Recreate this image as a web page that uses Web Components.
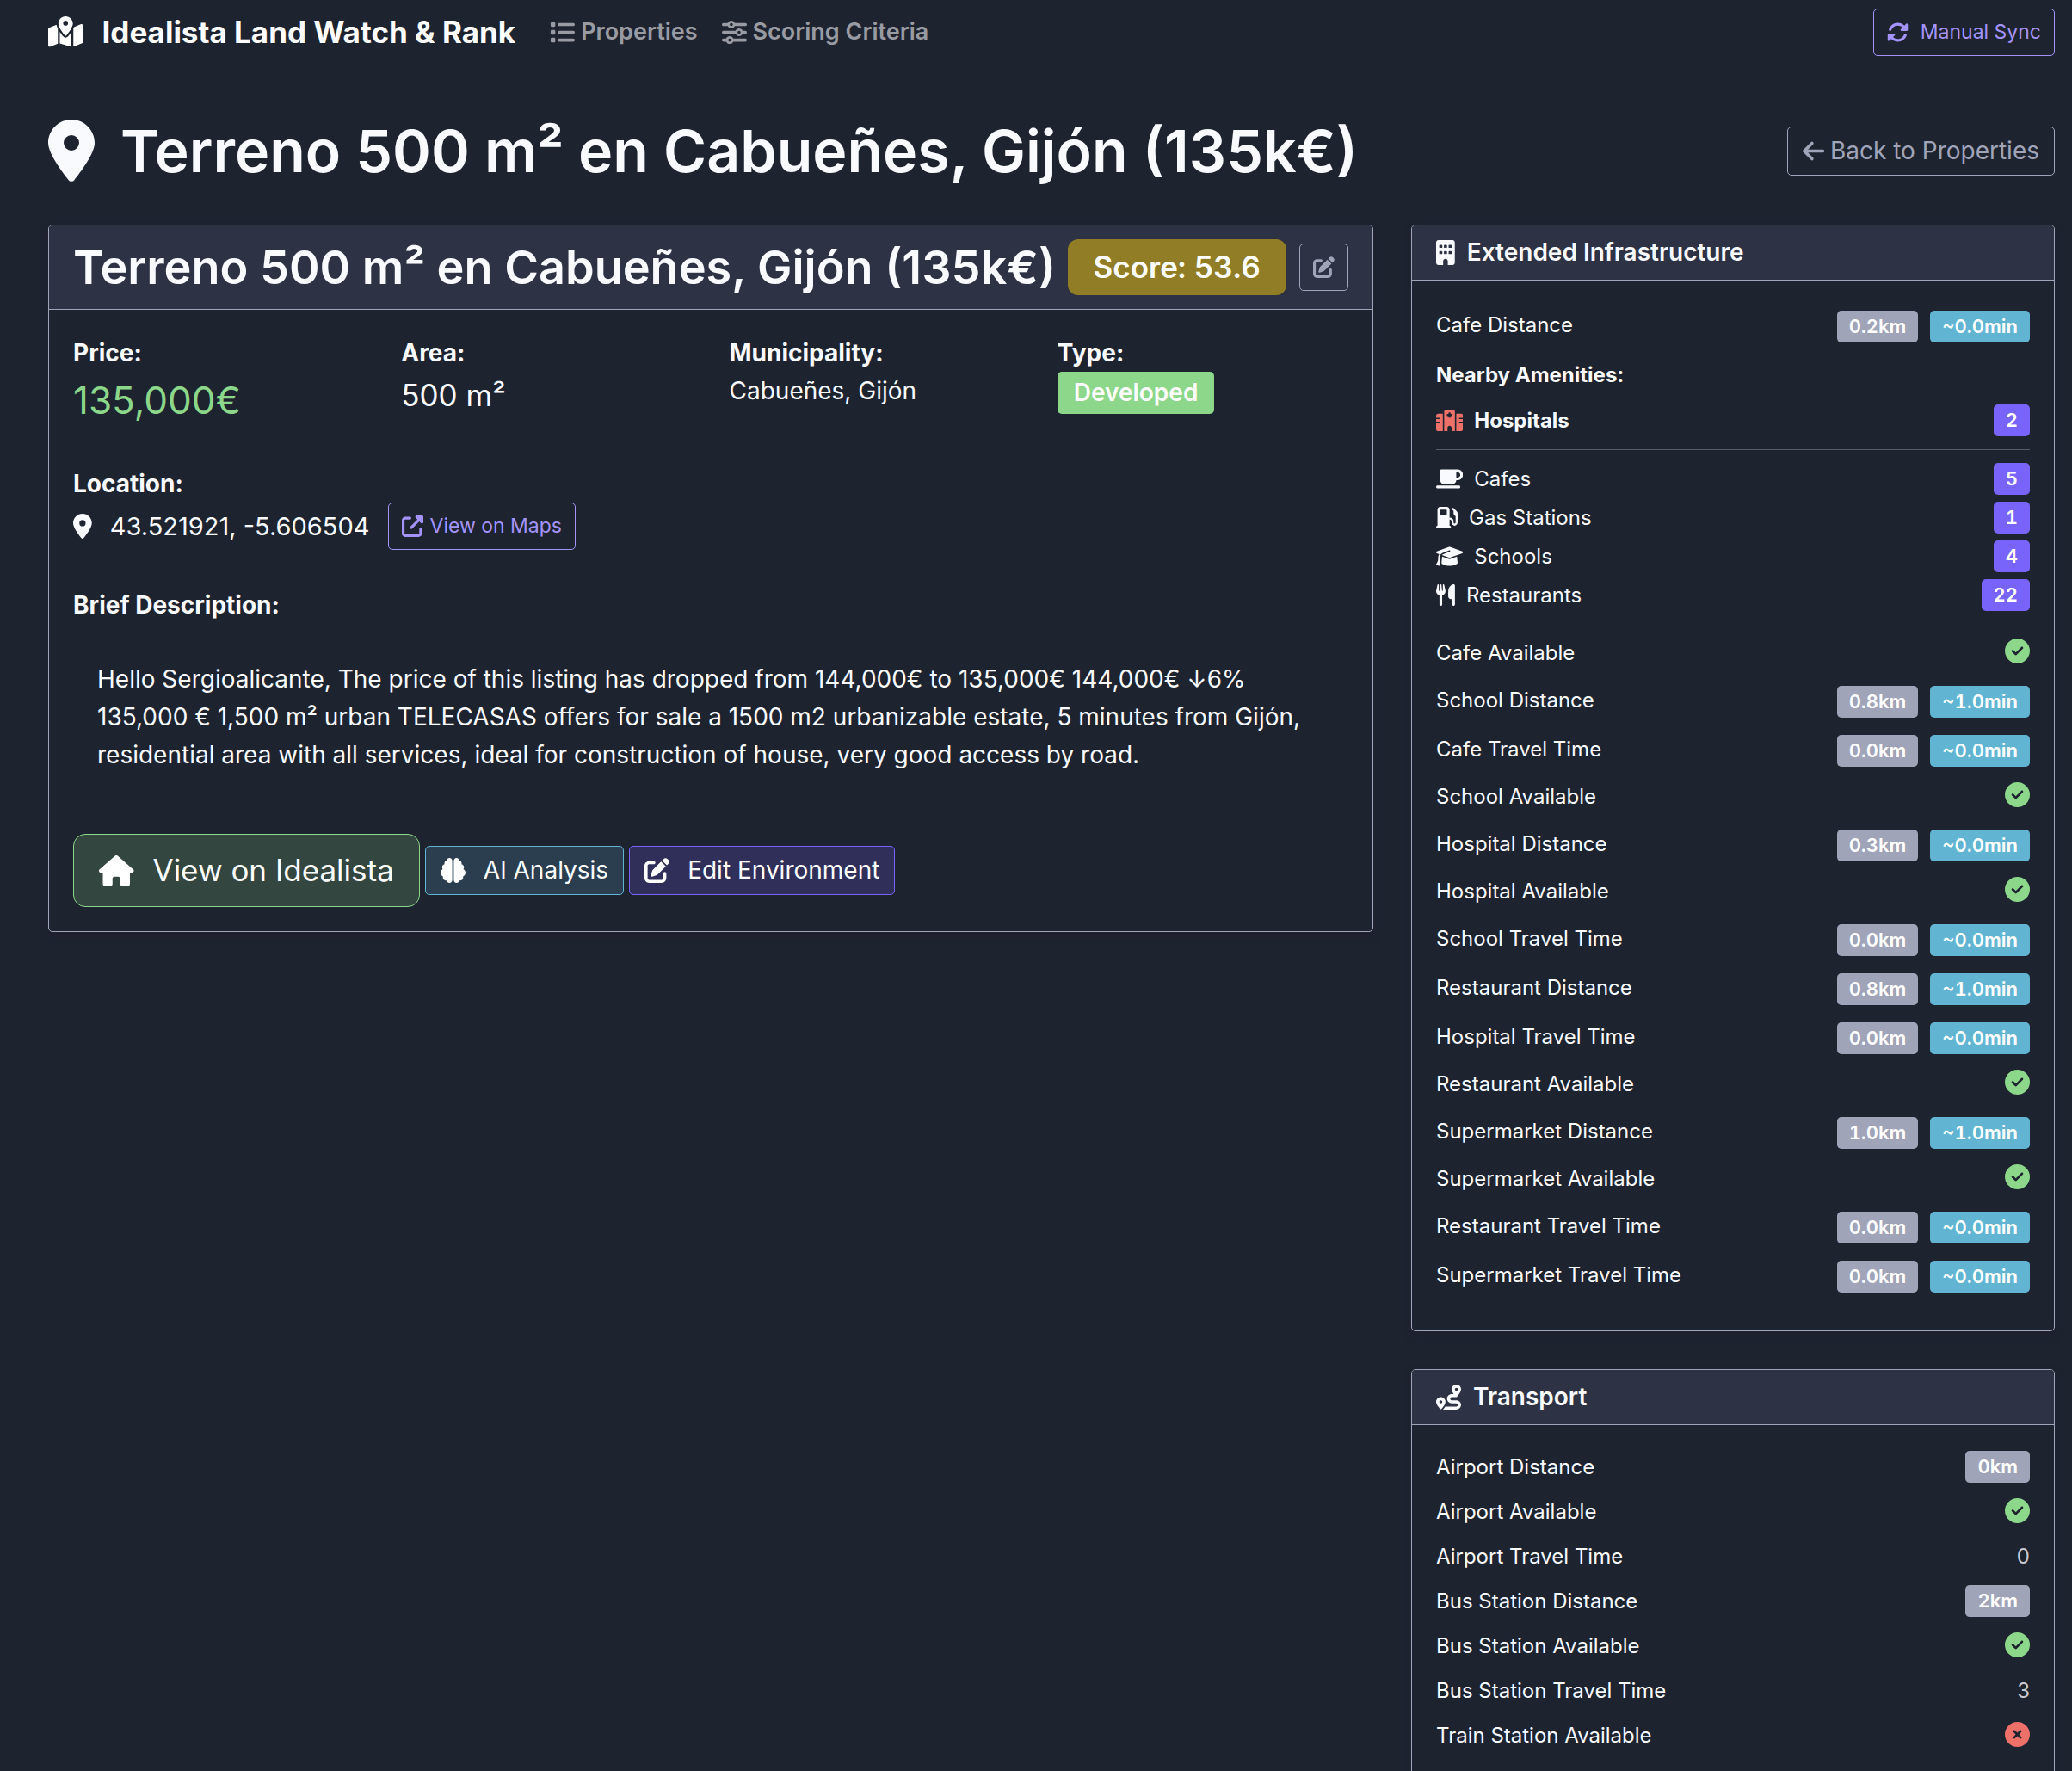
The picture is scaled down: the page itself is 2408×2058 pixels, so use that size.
<!DOCTYPE html>
<html lang="en">
<head>
<meta charset="utf-8">
<meta name="viewport" content="width=device-width, initial-scale=1">
<title>Idealista Land Watch &amp; Rank</title>
<style>
  :root {
    --bg: #1e2330;
    --surface: #2e3245;
    --text: #f8fafd;
    --line: #a0a4b8;
    --grey: #a0a4b8;
    --teal: #61b5d3;
    --purple: #7864fa;
    --lilac: #a393fb;
    --green: #8cd789;
    --red: #ed7069;
    --gold: #917d25;
    --fs-sm: 24px;
    --fs: 28px;
    --fs-lg: 35px;
    --lh: 44px;
  }
  body {
    margin: 0;
    background: var(--bg);
    color: var(--text);
    font-family: Inter, "Liberation Sans", sans-serif;
    font-size: var(--fs);
    line-height: var(--lh);
  }
</style>
</head>
<body>
<land-app></land-app>

<script>
const ICONS = {
  map: [576, "M408 120c0 54.6-73.1 151.9-105.2 192c-7.7 9.6-22 9.6-29.6 0C241.1 271.9 168 174.6 168 120C168 53.7 221.7 0 288 0s120 53.7 120 120zm8 80.4c3.5-6.9 6.7-13.8 9.6-20.6c.5-1.2 1-2.5 1.5-3.7l116-46.4C558.9 123.4 576 135 576 152V422.8c0 9.8-6 18.6-15.1 22.3L416 503V200.4zM137.6 138.3c2.4 14.1 7.2 28.3 12.8 41.5c2.9 6.8 6.1 13.7 9.6 20.6V451.8L32.9 502.7C17.1 509 0 497.4 0 480.4V209.6c0-9.8 6-18.6 15.1-22.3l122.6-49zM327.8 332c13.9-17.4 35.7-45.7 56.2-77V504.3L192 449.4V255c20.5 31.3 42.3 59.6 56.2 77c20.5 25.6 59.1 25.6 79.6 0zM288 152a40 40 0 1 0 0-80 40 40 0 1 0 0 80z"],
  list: [512, "M40 48C26.7 48 16 58.7 16 72v48c0 13.3 10.7 24 24 24H88c13.3 0 24-10.7 24-24V72c0-13.3-10.7-24-24-24H40zM192 64c-17.7 0-32 14.3-32 32s14.3 32 32 32H480c17.7 0 32-14.3 32-32s-14.3-32-32-32H192zm0 160c-17.7 0-32 14.3-32 32s14.3 32 32 32H480c17.7 0 32-14.3 32-32s-14.3-32-32-32H192zm0 160c-17.7 0-32 14.3-32 32s14.3 32 32 32H480c17.7 0 32-14.3 32-32s-14.3-32-32-32H192zM16 232v48c0 13.3 10.7 24 24 24H88c13.3 0 24-10.7 24-24V232c0-13.3-10.7-24-24-24H40c-13.3 0-24 10.7-24 24zM40 368c-13.3 0-24 10.7-24 24v48c0 13.3 10.7 24 24 24H88c13.3 0 24-10.7 24-24V392c0-13.3-10.7-24-24-24H40z"],
  sliders: [512, "M0 416c0 17.7 14.3 32 32 32l54.7 0c12.3 28.3 40.5 48 73.3 48s61-19.7 73.3-48L480 448c17.7 0 32-14.3 32-32s-14.3-32-32-32l-246.7 0c-12.3-28.3-40.5-48-73.3-48s-61 19.7-73.3 48L32 384c-17.7 0-32 14.3-32 32zm128 0a32 32 0 1 1 64 0 32 32 0 1 1 -64 0zM320 256a32 32 0 1 1 64 0 32 32 0 1 1 -64 0zm32-80c-32.8 0-61 19.7-73.3 48L32 224c-17.7 0-32 14.3-32 32s14.3 32 32 32l246.7 0c12.3 28.3 40.5 48 73.3 48s61-19.7 73.3-48l54.7 0c17.7 0 32-14.3 32-32s-14.3-32-32-32l-54.7 0c-12.3-28.3-40.5-48-73.3-48zM192 128a32 32 0 1 1 0-64 32 32 0 1 1 0 64zm73.3-64C253 35.7 224.8 16 192 16s-61 19.7-73.3 48L32 64C14.3 64 0 78.3 0 96s14.3 32 32 32l86.7 0c12.3 28.3 40.5 48 73.3 48s61-19.7 73.3-48L480 128c17.7 0 32-14.3 32-32s-14.3-32-32-32L265.3 64z"],
  sync: [512, "M142.9 142.9c62.2-62.2 162.7-62.5 225.3-1L327 183c-6.9 6.9-8.9 17.2-5.2 26.2s12.5 14.8 22.2 14.8H463.5c0 0 0 0 0 0H472c13.3 0 24-10.7 24-24V72c0-9.7-5.8-18.5-14.8-22.2s-19.3-1.7-26.2 5.2L413.4 96.6c-87.6-86.5-228.7-86.2-315.8 1C73.2 122 55.6 150.7 44.8 181.4c-5.9 16.7 2.9 34.9 19.5 40.8s34.9-2.9 40.8-19.5c7.7-21.8 20.2-42.3 37.8-59.8zM16 312v7.6 .7V440c0 9.7 5.8 18.5 14.8 22.2s19.3 1.7 26.2-5.2l41.6-41.6c87.6 86.5 228.7 86.2 315.8-1c24.4-24.4 42.1-53.1 52.9-83.7c5.9-16.7-2.9-34.9-19.5-40.8s-34.9 2.9-40.8 19.5c-7.7 21.8-20.2 42.3-37.8 59.8c-62.2 62.2-162.7 62.5-225.3 1L185 329c6.9-6.9 8.9-17.2 5.2-26.2s-12.5-14.8-22.2-14.8H48.4h-.7H40c-13.3 0-24 10.7-24 24z"],
  pin: [384, "M215.7 499.2C267 435 384 279.4 384 192C384 86 298 0 192 0S0 86 0 192c0 87.4 117 243 168.3 307.2c12.3 15.3 35.1 15.3 47.4 0zM192 128a64 64 0 1 1 0 128 64 64 0 1 1 0-128z"],
  back: [448, "M9.4 233.4c-12.5 12.5-12.5 32.8 0 45.3l160 160c12.5 12.5 32.8 12.5 45.3 0s12.5-32.8 0-45.3L109.2 288 416 288c17.7 0 32-14.3 32-32s-14.3-32-32-32l-306.7 0L214.6 118.6c12.5-12.5 12.5-32.8 0-45.3s-32.8-12.5-45.3 0l-160 160z"],
  edit: [512, "M471.6 21.7c-21.9-21.9-57.3-21.9-79.2 0L362.3 51.7l97.9 97.9 30.1-30.1c21.9-21.9 21.9-57.3 0-79.2L471.6 21.7zm-299.2 220c-6.1 6.1-10.8 13.6-13.5 21.9l-29.6 88.8c-2.9 8.6-.6 18.1 5.8 24.6s15.9 8.7 24.6 5.8l88.8-29.6c8.2-2.7 15.7-7.4 21.9-13.5L437.7 172.3 339.7 74.3 172.4 241.7zM96 64C43 64 0 107 0 160V416c0 53 43 96 96 96H352c53 0 96-43 96-96V320c0-17.7-14.3-32-32-32s-32 14.3-32 32v96c0 17.7-14.3 32-32 32H96c-17.7 0-32-14.3-32-32V160c0-17.7 14.3-32 32-32h96c17.7 0 32-14.3 32-32s-14.3-32-32-32H96z"],
  external: [512, "M352 0c-12.9 0-24.6 7.8-29.6 19.8s-2.2 25.7 6.9 34.9L370.7 96 201.4 265.4c-12.5 12.5-12.5 32.8 0 45.3s32.8 12.5 45.3 0L416 141.3l41.4 41.4c9.2 9.2 22.9 11.9 34.9 6.9s19.8-16.6 19.8-29.6V32c0-17.7-14.3-32-32-32H352zM80 32C35.8 32 0 67.8 0 112V432c0 44.2 35.8 80 80 80H400c44.2 0 80-35.8 80-80V320c0-17.7-14.3-32-32-32s-32 14.3-32 32V432c0 8.8-7.2 16-16 16H80c-8.8 0-16-7.2-16-16V112c0-8.8 7.2-16 16-16H192c17.7 0 32-14.3 32-32s-14.3-32-32-32H80z"],
  home: [576, "M575.8 255.5c0 18-15 32.1-32 32.1h-32l.7 160.2c0 2.7-.2 5.4-.5 8.1V472c0 22.1-17.9 40-40 40H456c-1.1 0-2.2 0-3.3-.1c-1.4 .1-2.8 .1-4.2 .1H416 392c-22.1 0-40-17.9-40-40V448 384c0-17.7-14.3-32-32-32H256c-17.7 0-32 14.3-32 32v64 24c0 22.1-17.9 40-40 40H160 128.1c-1.5 0-3-.1-4.5-.2c-1.2 .1-2.4 .2-3.6 .2H104c-22.1 0-40-17.9-40-40V360c0-.9 0-1.9 .1-2.8V287.6H32c-18 0-32-14-32-32.1c0-9 3-17 10-24L266.4 8c7-7 15-8 22-8s15 2 21 7L564.8 231.5c8 7 12 15 11 24z"],
  brain: [512, "M184 0c30.9 0 56 25.1 56 56V456c0 30.9-25.1 56-56 56c-28.9 0-52.7-21.9-55.7-50.1c-5.2 1.4-10.7 2.1-16.3 2.1c-35.3 0-64-28.7-64-64c0-7.4 1.3-14.6 3.6-21.2C21.4 367.4 0 338.2 0 304c0-31.9 18.7-59.5 45.8-72.3C37.1 220.8 32 207 32 192c0-30.7 21.6-56.3 50.4-62.6C80.8 123.9 80 118 80 112c0-29.9 20.6-55.1 48.3-62.1C131.3 21.9 155.1 0 184 0zM328 0c28.9 0 52.6 21.9 55.7 49.9c27.8 7 48.3 32.1 48.3 62.1c0 6-.8 11.9-2.4 17.4c28.8 6.2 50.4 31.9 50.4 62.6c0 15-5.1 28.8-13.8 39.7C493.3 244.5 512 272.1 512 304c0 34.2-21.4 63.4-51.6 74.8c2.3 6.6 3.6 13.8 3.6 21.2c0 35.3-28.7 64-64 64c-5.6 0-11.1-.7-16.3-2.1c-3 28.2-26.8 50.1-55.7 50.1c-30.9 0-56-25.1-56-56V56c0-30.9 25.1-56 56-56z"],
  building: [384, "M48 0C21.5 0 0 21.5 0 48V464c0 26.5 21.5 48 48 48h96V432c0-26.5 21.5-48 48-48s48 21.5 48 48v80h96c26.5 0 48-21.5 48-48V48c0-26.5-21.5-48-48-48H48zM64 240c0-8.8 7.2-16 16-16h32c8.8 0 16 7.2 16 16v32c0 8.8-7.2 16-16 16H80c-8.8 0-16-7.2-16-16V240zm112-16h32c8.8 0 16 7.2 16 16v32c0 8.8-7.2 16-16 16H176c-8.8 0-16-7.2-16-16V240c0-8.8 7.2-16 16-16zm80 16c0-8.8 7.2-16 16-16h32c8.8 0 16 7.2 16 16v32c0 8.8-7.2 16-16 16H272c-8.8 0-16-7.2-16-16V240zM80 96h32c8.8 0 16 7.2 16 16v32c0 8.8-7.2 16-16 16H80c-8.8 0-16-7.2-16-16V112c0-8.8 7.2-16 16-16zm80 16c0-8.8 7.2-16 16-16h32c8.8 0 16 7.2 16 16v32c0 8.8-7.2 16-16 16H176c-8.8 0-16-7.2-16-16V112zM272 96h32c8.8 0 16 7.2 16 16v32c0 8.8-7.2 16-16 16H272c-8.8 0-16-7.2-16-16V112c0-8.8 7.2-16 16-16z"],
  cafe: [640, "M96 64c0-17.7 14.3-32 32-32H448h64c70.7 0 128 57.3 128 128s-57.3 128-128 128H480c0 53-43 96-96 96H192c-53 0-96-43-96-96V64zM480 224h32c35.3 0 64-28.7 64-64s-28.7-64-64-64H480V224zM32 416H544c17.7 0 32 14.3 32 32s-14.3 32-32 32H32c-17.7 0-32-14.3-32-32s14.3-32 32-32z"],
  gas: [512, "M32 64C32 28.7 60.7 0 96 0H256c35.3 0 64 28.7 64 64V256h8c48.6 0 88 39.4 88 88v32c0 13.3 10.7 24 24 24s24-10.7 24-24V222c-27.6-7.1-48-32.2-48-62V96L384 64c-8.8-8.8-8.8-23.2 0-32s23.2-8.8 32 0l77.3 77.3c12 12 18.7 28.3 18.7 45.3V168v24 32V376c0 39.8-32.2 72-72 72s-72-32.2-72-72V344c0-22.1-17.9-40-40-40h-8V448c17.7 0 32 14.3 32 32s-14.3 32-32 32H32c-17.7 0-32-14.3-32-32s14.3-32 32-32V64zM96 80v96c0 8.8 7.2 16 16 16H240c8.8 0 16-7.2 16-16V80c0-8.8-7.2-16-16-16H112c-8.8 0-16 7.2-16 16z"],
  school: [640, "M320 32c-8.1 0-16.1 1.4-23.7 4.1L15.8 137.4C6.3 140.9 0 149.9 0 160s6.3 19.1 15.8 22.6l57.9 20.9C57.3 229.3 48 259.8 48 291.9v28.1c0 28.4-10.8 57.7-22.3 80.8c-6.5 13-13.9 25.8-22.5 37.6C0 442.7-.9 448.3 .9 453.4s6 8.9 11.2 10.2l64 16c4.2 1.1 8.7 .3 12.4-2s6.3-6.1 7.1-10.4c8.6-42.8 4.3-81.2-2.1-108.7C90.3 344.3 86 329.8 80 316.5V291.9c0-30.2 10.2-58.7 27.9-81.5c12.9-15.5 29.6-28 49.2-35.7l157-61.7c8.2-3.2 17.5 .8 20.7 9s-.8 17.5-9 20.7l-157 61.7c-12.4 4.9-23.3 12.4-32.2 21.6l159.6 57.6c7.6 2.7 15.6 4.1 23.7 4.1s16.1-1.4 23.7-4.1L624.2 182.6c9.5-3.4 15.8-12.5 15.8-22.6s-6.3-19.1-15.8-22.6L343.7 36.1C336.1 33.4 328.1 32 320 32zM128 408c0 35.3 86 72 192 72s192-36.7 192-72L496.7 262.6 354.5 314c-11.1 4-22.8 6-34.5 6s-23.5-2-34.5-6L143.3 262.6 128 408z"],
  food: [448, "M416 0C400 0 288 32 288 176V288c0 35.3 28.7 64 64 64h32V480c0 17.7 14.3 32 32 32s32-14.3 32-32V352 240 32c0-17.7-14.3-32-32-32zM64 16C64 7.8 57.9 1 49.7 .1S34.2 4.6 32.4 12.5L2.1 148.8C.7 155.1 0 161.5 0 167.9c0 45.9 35.1 83.6 80 87.7V480c0 17.7 14.3 32 32 32s32-14.3 32-32V255.6c44.9-4.1 80-41.8 80-87.7c0-6.4-.7-12.8-2.1-19.1L191.6 12.5c-1.8-8-9.3-13.3-17.4-12.4S160 7.8 160 16V150.2c0 5.4-4.4 9.8-9.8 9.8c-5.1 0-9.3-3.9-9.8-9L127.9 14.6C127.2 6.3 120.3 0 112 0s-15.2 6.3-15.9 14.6L83.7 151c-.5 5.1-4.7 9-9.8 9c-5.4 0-9.8-4.4-9.8-9.8V16z"],
  hospital: [640, "M192 48c0-26.5 21.5-48 48-48H400c26.5 0 48 21.5 48 48V512H368V432c0-26.5-21.5-48-48-48s-48 21.5-48 48v80H192V48zM48 96H160V512H48c-26.5 0-48-21.5-48-48V320H80c8.8 0 16-7.2 16-16s-7.2-16-16-16H0V224H80c8.8 0 16-7.2 16-16s-7.2-16-16-16H0V144c0-26.5 21.5-48 48-48zm544 0c26.5 0 48 21.5 48 48v48H560c-8.8 0-16 7.2-16 16s7.2 16 16 16h80v64H560c-8.8 0-16 7.2-16 16s7.2 16 16 16h80V464c0 26.5-21.5 48-48 48H480V96H592zM312 64c-8.8 0-16 7.2-16 16v24H272c-8.8 0-16 7.2-16 16v16c0 8.8 7.2 16 16 16h24v24c0 8.8 7.2 16 16 16h16c8.8 0 16-7.2 16-16V152h24c8.8 0 16-7.2 16-16V120c0-8.8-7.2-16-16-16H344V80c0-8.8-7.2-16-16-16H312z"],
  route: [512, "M512 96c0 50.2-59.1 125.1-84.6 155c-3.8 4.4-9.4 6.1-14.5 5H320c-17.7 0-32 14.3-32 32s14.3 32 32 32h96c53 0 96 43 96 96s-43 96-96 96H139.6c8.7-9.9 19.3-22.6 30-36.8c6.3-8.4 12.8-17.6 19-27.2H416c17.7 0 32-14.3 32-32s-14.3-32-32-32H320c-53 0-96-43-96-96s43-96 96-96h39.8c-21-31.5-39.8-67.7-39.8-96c0-53 43-96 96-96s96 43 96 96zM117.1 489.1c-3.8 4.3-7.2 8.1-10.1 11.3l-1.8 2-.2-.2c-6 4.6-14.6 4-20-1.8C59.8 473 0 402.5 0 352c0-53 43-96 96-96s96 43 96 96c0 30-21.1 67-43.5 97.9c-10.7 14.7-21.7 28-30.8 38.5l-.6 .7zM128 352a32 32 0 1 0 -64 0 32 32 0 1 0 64 0zM416 128a32 32 0 1 0 0-64 32 32 0 1 0 0 64z"],
  yes: [512, "M256 512A256 256 0 1 0 256 0a256 256 0 1 0 0 512zM369 209L241 337c-9.4 9.4-24.6 9.4-33.9 0l-64-64c-9.4-9.4-9.4-24.6 0-33.9s24.6-9.4 33.9 0l47 47L335 175c9.4-9.4 24.6-9.4 33.9 0s9.4 24.6 0 33.9z"],
  no: [512, "M256 512A256 256 0 1 0 256 0a256 256 0 1 0 0 512zM175 175c9.4-9.4 24.6-9.4 33.9 0l47 47 47-47c9.4-9.4 24.6-9.4 33.9 0s9.4 24.6 0 33.9l-47 47 47 47c9.4 9.4 9.4 24.6 0 33.9s-24.6 9.4-33.9 0l-47-47-47 47c-9.4 9.4-24.6 9.4-33.9 0s-9.4-24.6 0-33.9l47-47-47-47c-9.4-9.4-9.4-24.6 0-33.9z"]
};

class Base extends HTMLElement {
  connectedCallback() {
    if (this.shadowRoot) return;
    this.attachShadow({ mode: "open" }).innerHTML = this.render();
  }
  attr(name, fallback = "") { return this.getAttribute(name) ?? fallback; }
}

/* <ui-icon name size> : one glyph, its height given in pixels */
customElements.define("ui-icon", class extends Base {
  render() {
    const [w, d] = ICONS[this.attr("name")];
    const size = this.attr("size", "28");
    return `<style>
      :host { display: inline-flex; flex: none; }
      svg { display: block; height: ${size}px; fill: currentColor; }
    </style><svg viewBox="0 0 ${w} 512" aria-hidden="true"><path d="${d}"/></svg>`;
  }
});

/* <ui-badge tone size> */
customElements.define("ui-badge", class extends Base {
  render() {
    return `<style>
      :host { display: inline-block; padding: 0 14px; border-radius: 5px; background: var(--grey);
        color: #fff; font-size: 22px; font-weight: 600; font-variant-numeric: tabular-nums; line-height: 37px; white-space: nowrap; }
      :host([tone=teal]) { background: var(--teal); }
      :host([tone=purple]) { background: var(--purple); }
      :host([tone=green]) { background: var(--green); }
      :host([tone=gold]) { background: var(--gold); }
      :host([size=md]) { padding: 0 19px; font-size: var(--fs); line-height: 49px; }
      :host([size=lg]) { padding: 0 30px; font-size: var(--fs-lg); line-height: 65px; border-radius: 12px; }
    </style><slot></slot>`;
  }
});

/* <ui-button icon tone size href> : a link when it has an href, a button otherwise */
customElements.define("ui-button", class extends Base {
  render() {
    const size = this.attr("size", "md");
    const iconSize = { sm: 25, md: 29, lg: 36 }[size];
    const tag = this.hasAttribute("href") ? "a" : "button";
    const open = tag === "a" ? `a href="${this.attr("href")}"` : `button type="button"`;
    const label = this.hasAttribute("label") ? ` aria-label="${this.attr("label")}"` : "";
    const text = this.textContent.trim() ? "<span><slot></slot></span>" : "";
    return `<style>
      :host { display: inline-flex; --c: var(--grey); --gap: 21px; }
      :host([tight]) { --gap: 7px; }
      :host([tone=lilac]) { --c: var(--lilac); }
      a, button { display: inline-flex; align-items: center; box-sizing: border-box; min-height: 55px; gap: var(--gap); margin: 0; padding: 5px 17px;
        border: 1px solid var(--c); border-radius: 5px; background: transparent; color: var(--c);
        font: inherit; font-size: var(--fs); line-height: 45px; text-decoration: none; white-space: nowrap; cursor: pointer; }
      :host([size=sm]) { --gap: 14px; }
      :host([size=sm][tight]) { --gap: 8px; }
      :host([size=sm]) :is(a, button) { padding: 6px 15px; font-size: 23px; line-height: 41px; }
      :host([size=lg]) { --gap: 22px; }
      :host([size=lg]) :is(a, button) { padding: 14px 29px; font-size: var(--fs-lg); line-height: 55px; border-radius: 14px; }
      :host([tone=green]) :is(a, button) { --c: var(--green); color: #fff; background: #334640; }
      :host([tone=teal]) :is(a, button) { --c: var(--teal); color: #fff; background: #2a3e50; }
      :host([tone=purple]) :is(a, button) { --c: var(--purple); color: #fff; background: #302f5a; }
    </style><${open}${label}><ui-icon name="${this.attr("icon")}" size="${iconSize}"></ui-icon>${text}</${tag}>`;
  }
});

/* <ui-card> : slots "header" and default */
customElements.define("ui-card", class extends Base {
  render() {
    return `<style>
      :host { display: block; border: 1px solid var(--line); border-radius: 5px; overflow: hidden;
        box-shadow: 0 4px 8px rgba(33, 28, 40, .5); }
      header { display: flex; align-items: center; padding: 14px 28px; background: var(--surface);
        border-bottom: 1px solid var(--line); }
      .body { padding: 28px; }
    </style><header><slot name="header"></slot></header><div class="body"><slot></slot></div>`;
  }
});

/* <card-title icon> : small heading of a side card */
customElements.define("card-title", class extends Base {
  render() {
    return `<style>
      :host { display: block; }
      h2 { display: flex; align-items: center; gap: 14px; margin: 0; font-size: var(--fs); font-weight: 600; line-height: 35px; }
    </style><h2><ui-icon name="${this.attr("icon")}" size="29"></ui-icon><span><slot></slot></span></h2>`;
  }
});

/* <nav-bar> */
customElements.define("nav-bar", class extends Base {
  render() {
    return `<style>
      :host { display: block; }
      nav { display: flex; align-items: center; height: 74px; }
      a { display: inline-flex; align-items: center; gap: 7px; color: #999ba2; font-size: 27px; font-weight: 600; text-decoration: none; }
      .brand { gap: 22px; margin-right: 40px; color: #fff; font-size: var(--fs-lg); font-weight: 700; }
      .links { display: flex; gap: 28px; flex: 1; }
    </style><nav>
      <a class="brand" href="#"><ui-icon name="map" size="36"></ui-icon><span>Idealista Land Watch &amp; Rank</span></a>
      <div class="links">
        <a href="#properties"><ui-icon name="list" size="29"></ui-icon><span>Properties</span></a>
        <a href="#criteria"><ui-icon name="sliders" size="29"></ui-icon><span>Scoring Criteria</span></a>
      </div>
      <ui-button icon="sync" tone="lilac" size="sm">Manual Sync</ui-button>
    </nav>`;
  }
});

/* <page-heading> */
customElements.define("page-heading", class extends Base {
  render() {
    return `<style>
      :host { display: flex; align-items: center; justify-content: space-between; gap: 28px; }
      h1 { display: flex; align-items: center; gap: 30px; margin: 0; font-size: 68px; font-weight: 600; line-height: 84px; }
    </style><h1><ui-icon name="pin" size="72"></ui-icon><span><slot></slot></span></h1>
    <ui-button icon="back" tight href="#properties">Back to Properties</ui-button>`;
  }
});

/* <info-field label> : a bold label over its value */
customElements.define("info-field", class extends Base {
  render() {
    return `<style>
      :host { display: block; }
      .label { font-weight: 700; }
    </style><div class="label">${this.attr("label")}</div><slot></slot>`;
  }
});

/* <metric-row label km min | ok | no | value> */
customElements.define("metric-row", class extends Base {
  render() {
    let value = `<span class="num">${this.attr("value")}</span>`;
    if (this.hasAttribute("km")) value = `<ui-badge>${this.attr("km")}km</ui-badge>`;
    if (this.hasAttribute("min")) value += `<ui-badge tone="teal">~${this.attr("min")}min</ui-badge>`;
    if (this.hasAttribute("ok")) value = `<ui-icon class="ok" name="yes" size="29" role="img" aria-label="Yes"></ui-icon>`;
    if (this.hasAttribute("no")) value = `<ui-icon class="no" name="no" size="29" role="img" aria-label="No"></ui-icon>`;
    return `<style>
      :host { display: flex; align-items: center; justify-content: space-between; min-height: var(--row-height, 37px);
        font-size: var(--fs-sm); line-height: 37px; }
      .value { display: flex; align-items: center; gap: 14px; }
      :host([min]) .value { padding-top: 5px; }
      .num { color: #c7c9cf; }
      ui-icon { padding-bottom: 3px; }
      .ok { color: var(--green); }
      .no { color: var(--red); }
    </style><span>${this.attr("label")}</span><span class="value">${value}</span>`;
  }
});

/* <amenity-row icon count> */
customElements.define("amenity-row", class extends Base {
  render() {
    return `<style>
      :host { display: flex; align-items: center; justify-content: space-between; font-size: var(--fs-sm); line-height: 37px; }
      :host([strong]) { padding-bottom: 15px; margin-bottom: 7px; border-bottom: 1px solid #575b67; font-weight: 700; }
      .name { display: flex; align-items: center; gap: 13px; }
      :host([strong]) ui-icon { color: var(--red); }
    </style><span class="name"><ui-icon name="${this.attr("icon")}" size="25"></ui-icon><span><slot></slot></span></span>
    <ui-badge tone="purple">${this.attr("count")}</ui-badge>`;
  }
});

/* <listing-card> */
customElements.define("listing-card", class extends Base {
  render() {
    return `<style>
      :host { display: block; }
      h2 { flex: 1; margin: 0; font-size: 54px; font-weight: 600; line-height: 69px; white-space: nowrap; }
      .tools { display: flex; align-items: center; gap: 15px; }
      .fields { display: grid; grid-template-columns: repeat(4, 1fr); gap: 43px; }
      .price { color: var(--green); font-size: 44px; line-height: 66px; }
      .area { font-size: var(--fs-lg); line-height: 55px; }
      .type { display: block; line-height: 0; }
      .place { margin-top: 42px; }
      .coords { display: flex; align-items: center; gap: 21px; font-size: 29px; }
      .pin { display: inline-flex; align-items: center; gap: 21px; }
      .brief { margin-top: 42px; }
      p { margin: 14px 0 42px; padding: 28px; }
      .actions { display: flex; align-items: center; gap: 6px; }
    </style>
    <ui-card>
      <h2 slot="header">Terreno 500 m² en Cabueñes, Gijón (135k€)</h2>
      <div slot="header" class="tools">
        <ui-badge tone="gold" size="lg">Score: 53.6</ui-badge>
        <ui-button icon="edit" size="sm" label="Edit score"></ui-button>
      </div>
      <div class="fields">
        <info-field label="Price:"><div class="price">135,000€</div></info-field>
        <info-field label="Area:"><div class="area">500 m²</div></info-field>
        <info-field label="Municipality:">Cabueñes, Gijón</info-field>
        <info-field label="Type:"><div class="type"><ui-badge tone="green" size="md">Developed</ui-badge></div></info-field>
      </div>
      <info-field class="place" label="Location:">
        <div class="coords">
          <span class="pin"><ui-icon name="pin" size="29"></ui-icon>43.521921, -5.606504</span>
          <ui-button icon="external" tone="lilac" size="sm" tight href="#maps">View on Maps</ui-button>
        </div>
      </info-field>
      <info-field class="brief" label="Brief Description:">
        <p>Hello Sergioalicante, The price of this listing has dropped from 144,000€ to 135,000€ 144,000€ ↓6% 135,000 € 1,500 m² urban TELECASAS offers for sale a 1500 m2 urbanizable estate, 5 minutes from Gijón, residential area with all services, ideal for construction of house, very good access by road.</p>
      </info-field>
      <div class="actions">
        <ui-button icon="home" tone="green" size="lg" href="#idealista">View on Idealista</ui-button>
        <ui-button icon="brain" tone="teal">AI Analysis</ui-button>
        <ui-button icon="edit" tone="purple" href="#environment">Edit Environment</ui-button>
      </div>
    </ui-card>`;
  }
});

/* <infrastructure-card> */
customElements.define("infrastructure-card", class extends Base {
  render() {
    return `<style>
      :host { display: block; }
      .rows { display: flex; flex-direction: column; gap: 15px; padding: 2px 0 16px; --row-height: 38px; }
      .amenities { display: flex; flex-direction: column; gap: 8px; margin-bottom: 14px; }
      h3 { margin: 0 0 4px; font-size: var(--fs-sm); font-weight: 700; line-height: 45px; }
    </style>
    <ui-card>
      <card-title slot="header" icon="building">Extended Infrastructure</card-title>
      <div class="rows">
        <metric-row label="Cafe Distance" km="0.2" min="0.0"></metric-row>
        <div class="amenities">
          <h3>Nearby Amenities:</h3>
          <amenity-row icon="hospital" count="2" strong>Hospitals</amenity-row>
          <amenity-row icon="cafe" count="5">Cafes</amenity-row>
          <amenity-row icon="gas" count="1">Gas Stations</amenity-row>
          <amenity-row icon="school" count="4">Schools</amenity-row>
          <amenity-row icon="food" count="22">Restaurants</amenity-row>
        </div>
        <metric-row label="Cafe Available" ok></metric-row>
        <metric-row label="School Distance" km="0.8" min="1.0"></metric-row>
        <metric-row label="Cafe Travel Time" km="0.0" min="0.0"></metric-row>
        <metric-row label="School Available" ok></metric-row>
        <metric-row label="Hospital Distance" km="0.3" min="0.0"></metric-row>
        <metric-row label="Hospital Available" ok></metric-row>
        <metric-row label="School Travel Time" km="0.0" min="0.0"></metric-row>
        <metric-row label="Restaurant Distance" km="0.8" min="1.0"></metric-row>
        <metric-row label="Hospital Travel Time" km="0.0" min="0.0"></metric-row>
        <metric-row label="Restaurant Available" ok></metric-row>
        <metric-row label="Supermarket Distance" km="1.0" min="1.0"></metric-row>
        <metric-row label="Supermarket Available" ok></metric-row>
        <metric-row label="Restaurant Travel Time" km="0.0" min="0.0"></metric-row>
        <metric-row label="Supermarket Travel Time" km="0.0" min="0.0"></metric-row>
      </div>
    </ui-card>`;
  }
});

/* <transport-card> */
customElements.define("transport-card", class extends Base {
  render() {
    return `<style>
      :host { display: block; }
      .rows { display: flex; flex-direction: column; gap: 15px; padding: 2px 0 16px; }
    </style>
    <ui-card>
      <card-title slot="header" icon="route">Transport</card-title>
      <div class="rows">
        <metric-row label="Airport Distance" km="0"></metric-row>
        <metric-row label="Airport Available" ok></metric-row>
        <metric-row label="Airport Travel Time" value="0"></metric-row>
        <metric-row label="Bus Station Distance" km="2"></metric-row>
        <metric-row label="Bus Station Available" ok></metric-row>
        <metric-row label="Bus Station Travel Time" value="3"></metric-row>
        <metric-row label="Train Station Available" no></metric-row>
      </div>
    </ui-card>`;
  }
});

/* <land-app> : page shell */
customElements.define("land-app", class extends Base {
  render() {
    return `<style>
      :host { display: block; box-sizing: border-box; height: 100vh; overflow: hidden; padding: 0 20px 0 56px; }
      page-heading { margin: 59px 0 44px; }
      main { display: grid; grid-template-columns: repeat(3, minmax(0, 1fr)); gap: 44px; align-items: start; }
      listing-card { grid-column: span 2; }
      aside { display: flex; flex-direction: column; gap: 44px; }
    </style>
    <nav-bar></nav-bar>
    <page-heading>Terreno 500 m² en Cabueñes, Gijón (135k€)</page-heading>
    <main>
      <listing-card></listing-card>
      <aside>
        <infrastructure-card></infrastructure-card>
        <transport-card></transport-card>
      </aside>
    </main>`;
  }
});
</script>
</body>
</html>
